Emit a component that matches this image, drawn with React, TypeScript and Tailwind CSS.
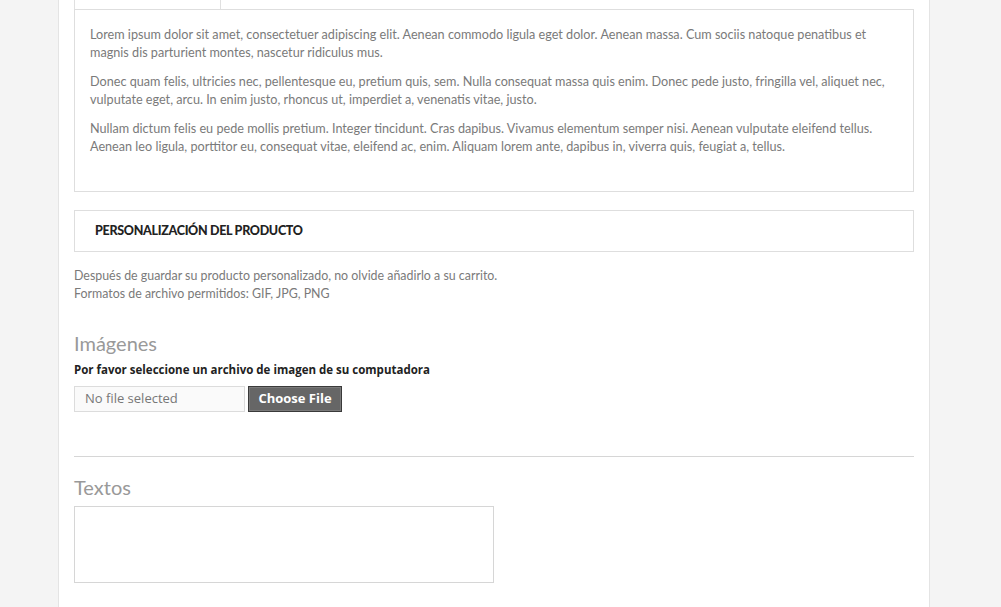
export default function App() {
  return (
    <div className="min-h-[607px] w-full bg-[#f4f4f4] font-['Lato',sans-serif]">
      <div className="ml-[58px] w-[872px] min-h-[607px] border-x border-[#e4e4e4] bg-white px-[15px]">
        {/* tab strip remnant */}
        <div className="flex h-[9px]">
          <div className="w-[147px] border-x border-[#e0e0e0]" />
        </div>

        <div className="border border-[#dedede] px-[15px] pt-[16px] pb-[24px] text-[12.65px] leading-[18px] text-[#7a7a7a]">
          <p className="mb-[11px]">
            Lorem ipsum dolor sit amet, consectetuer adipiscing elit. Aenean commodo ligula eget dolor. Aenean massa. Cum sociis natoque penatibus et magnis dis parturient montes, nascetur ridiculus mus.
          </p>
          <p className="mb-[11px]">
            Donec quam felis, ultricies nec, pellentesque eu, pretium quis, sem. Nulla consequat massa quis enim. Donec pede justo, fringilla vel, aliquet nec, vulputate eget, arcu. In enim justo, rhoncus ut, imperdiet a, venenatis vitae, justo.
          </p>
          <p className="mb-[11px]">
            Nullam dictum felis eu pede mollis pretium. Integer tincidunt. Cras dapibus. Vivamus elementum semper nisi. Aenean vulputate eleifend tellus. Aenean leo ligula, porttitor eu, consequat vitae, eleifend ac, enim. Aliquam lorem ante, dapibus in, viverra quis, feugiat a, tellus.
          </p>
        </div>

        <div className="mt-[18px] flex h-[42px] items-center border border-[#dedede] px-[20px]">
          <h3 className="text-[12.5px] font-black uppercase tracking-[-0.3px] text-[#222]">
            Personalización del producto
          </h3>
        </div>

        <div className="mt-[15px] text-[12.4px] leading-[18px] text-[#7a7a7a]">
          <p>Después de guardar su producto personalizado, no olvide añadirlo a su carrito.</p>
          <p>Formatos de archivo permitidos: GIF, JPG, PNG</p>
        </div>

        <h4 className="mt-[27px] text-[20px] leading-[26px] text-[#999]">Imágenes</h4>
        <p className="mt-[6px] font-['Open_Sans',sans-serif] text-[11.5px] font-bold leading-[15px] text-[#222]">
          Por favor seleccione un archivo de imagen de su computadora
        </p>
        <div className="mt-[9px] flex items-center gap-[3px] font-['Open_Sans',sans-serif]">
          <div className="flex h-[26px] w-[171px] items-center border border-[#dcdcdc] bg-[#fafafa] px-[10px] text-[13px] text-[#777]">
            No file selected
          </div>
          <button className="h-[26px] w-[94px] border border-[#3a3a3a] bg-[#666] text-[13px] font-bold text-white shadow-[inset_0_0_0_1px_#7a7a7a]">
            Choose File
          </button>
        </div>

        <div className="mt-[44px] border-t border-[#d6d6d6]" />

        <h4 className="mt-[17px] text-[20px] leading-[26px] text-[#999]">Textos</h4>
        <div className="mt-[6px] h-[77px] w-[420px] border border-[#d6d6d6]" />
      </div>
    </div>
  );
}
